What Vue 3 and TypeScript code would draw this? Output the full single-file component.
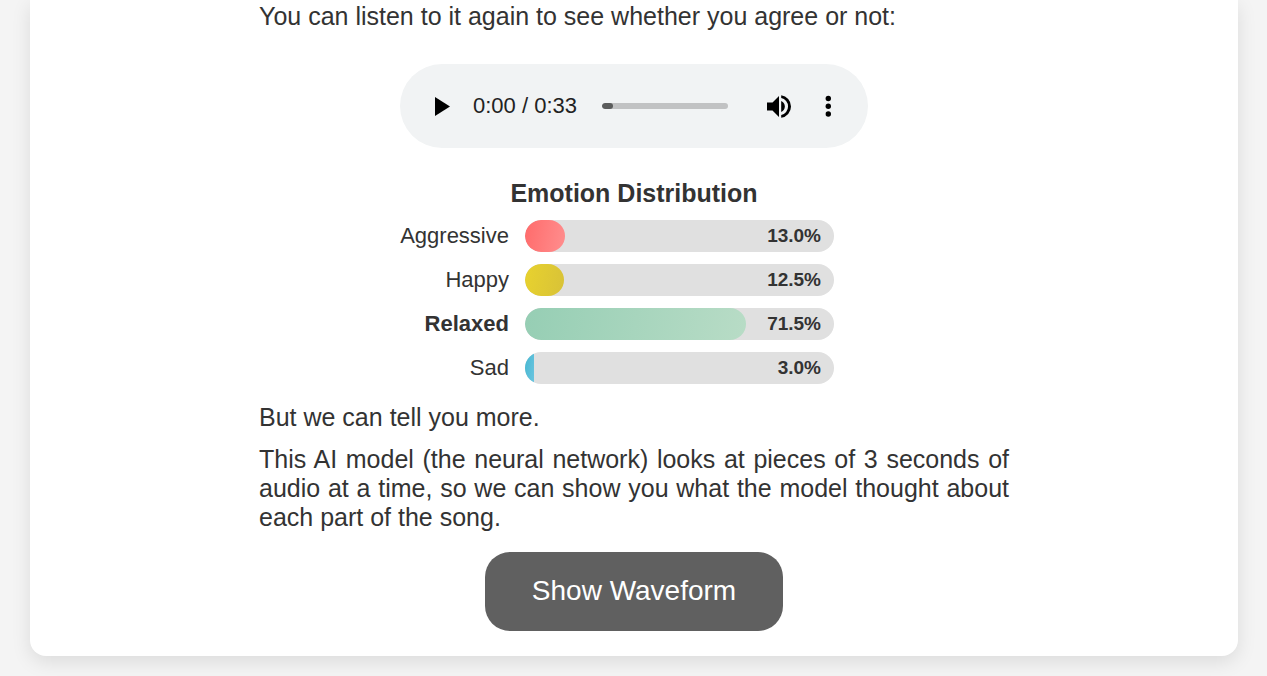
<script setup lang="ts">
import { ref } from 'vue'

interface Emotion {
  id: string
  label: string
  value: number
}

const emotions: Emotion[] = [
  { id: 'aggressive', label: 'Aggressive', value: 13.0 },
  { id: 'happy', label: 'Happy', value: 12.5 },
  { id: 'relaxed', label: 'Relaxed', value: 71.5 },
  { id: 'sad', label: 'Sad', value: 3.0 },
]
const dominant = emotions.reduce((a, b) => (b.value > a.value ? b : a)).id

const duration = 33
const position = ref(0)
const clock = (s: number): string => `0:${String(s).padStart(2, '0')}`
</script>

<template>
  <main class="card">
    <div class="content">
      <p>You can listen to it again to see whether you agree or not:</p>

      <div class="player" role="group" aria-label="Audio player">
        <button class="icon-button" type="button" aria-label="Play">
          <svg viewBox="0 0 16 20"><path d="M0 1V20L15 10.5Z" /></svg>
        </button>
        <span class="time">{{ clock(position) }} / {{ clock(duration) }}</span>
        <input
          v-model.number="position"
          class="timeline"
          type="range"
          min="0"
          :max="duration"
          aria-label="Position"
        />
        <button class="icon-button volume" type="button" aria-label="Mute">
          <svg viewBox="0 0 24 24">
            <path d="M0 8.5V16.5H5.5L12 23V2L5.5 8.5Z" />
            <path d="M14.2 7A6 6 0 0 1 14.2 18Z" />
            <path d="M14.2 1.3A11.3 11.3 0 0 1 14.2 23.7V21A8.7 8.7 0 0 0 14.2 4Z" />
          </svg>
        </button>
        <button class="icon-button menu" type="button" aria-label="More options">
          <svg viewBox="0 0 6 22">
            <circle cx="3.3" cy="3.5" r="2.7" />
            <circle cx="3.3" cy="11.2" r="2.7" />
            <circle cx="3.3" cy="19" r="2.7" />
          </svg>
        </button>
      </div>

      <h2>Emotion Distribution</h2>
      <div class="chart">
        <div v-for="e in emotions" :key="e.id" class="row">
          <span class="label" :class="{ strong: e.id === dominant }">{{ e.label }}</span>
          <div class="track">
            <div class="fill" :class="e.id" :style="{ width: e.value + '%' }"></div>
            <span class="percent">{{ e.value.toFixed(1) }}%</span>
          </div>
        </div>
      </div>

      <p>But we can tell you more.</p>
      <p class="explain">
        This AI model (the neural network) looks at pieces of 3 seconds of audio at a time, so we
        can show you what the model thought about each part of the song.
      </p>
      <button class="show" type="button">Show Waveform</button>
    </div>
  </main>
</template>

<style>
body {
  margin: 0;
  background: #f4f4f4;
}
</style>

<style scoped>
.card {
  box-sizing: border-box;
  margin: 0 29px 20px 30px;
  padding: 2px 24px 25px;
  background: #fff;
  border-radius: 0 0 16px 16px;
  box-shadow: 0 6px 19px rgba(0, 0, 0, 0.1);
  color: #333;
  font-family: "Liberation Sans", Arial, sans-serif;
  font-size: 25px;
  line-height: 29px;
}

.content {
  display: flex;
  flex-direction: column;
  max-width: 750px;
  margin: 0 auto;
}

p {
  margin: 0;
}

.player {
  box-sizing: border-box;
  display: flex;
  align-items: center;
  align-self: center;
  width: 100%;
  max-width: 468px;
  height: 84px;
  margin: 33px 0 31px;
  padding: 0 37px 0 35px;
  border-radius: 42px;
  background: #f1f3f4;
}

.icon-button {
  display: flex;
  flex: none;
  padding: 0;
  border: 0;
  background: none;
  cursor: pointer;
}

.icon-button svg {
  width: 16px;
  height: 20px;
  overflow: visible;
}

.icon-button.volume svg {
  width: 24px;
  height: 24px;
}

.icon-button.menu svg {
  width: 6px;
  height: 22px;
}

.time {
  flex: none;
  margin: 0 25px 0 22px;
  padding-bottom: 2px;
  color: #222;
  font-size: 22px;
}

.timeline {
  flex: 1;
  min-width: 0;
  height: 6px;
  margin: 0 39px 0 0;
  border-radius: 3px;
  background: #c1c2c3;
  appearance: none;
  overflow: hidden;
}

.timeline::-webkit-slider-thumb {
  width: 11px;
  height: 6px;
  border-radius: 3px;
  background: #5b5c5c;
  appearance: none;
}

.volume {
  margin-right: 34px;
}

h2 {
  margin: 0;
  font-size: 25px;
  line-height: 29px;
  text-align: center;
}

.chart {
  display: flex;
  flex-direction: column;
  align-self: center;
  gap: 12px;
  width: 100%;
  max-width: 468px;
  margin: 12px 0 19px;
}

.row {
  display: flex;
  gap: 16px;
  padding-right: 34px;
}

.label {
  flex: none;
  width: 109px;
  font-size: 22px;
  line-height: 31px;
  text-align: right;
}

.strong {
  font-weight: bold;
}

.track {
  display: flex;
  flex: 1;
  position: relative;
  height: 32px;
  border-radius: 16px;
  background: #e0e0e0;
  overflow: hidden;
}

.fill {
  border-radius: 16px;
}

.aggressive {
  background: linear-gradient(100deg, #ff6b6b, #ff8e8e);
}

.happy {
  background: linear-gradient(100deg, #e8d22e, #d8c238);
}

.relaxed {
  background: linear-gradient(100deg, #96ceb4, #b8dcc6);
}

.sad {
  border-radius: 0;
  background: linear-gradient(100deg, #45b7d1, #6cc5e0);
}

.percent {
  position: absolute;
  right: 13px;
  font-size: 19px;
  font-weight: bold;
  line-height: 32px;
}

.explain {
  margin: 13px 0 20px;
  text-align: justify;
}

.show {
  align-self: center;
  padding: 23px 47px 24px;
  border: 0;
  border-radius: 25px;
  background: #606060;
  color: #fff;
  font-family: inherit;
  font-size: 28px;
  line-height: 32px;
  cursor: pointer;
}
</style>
